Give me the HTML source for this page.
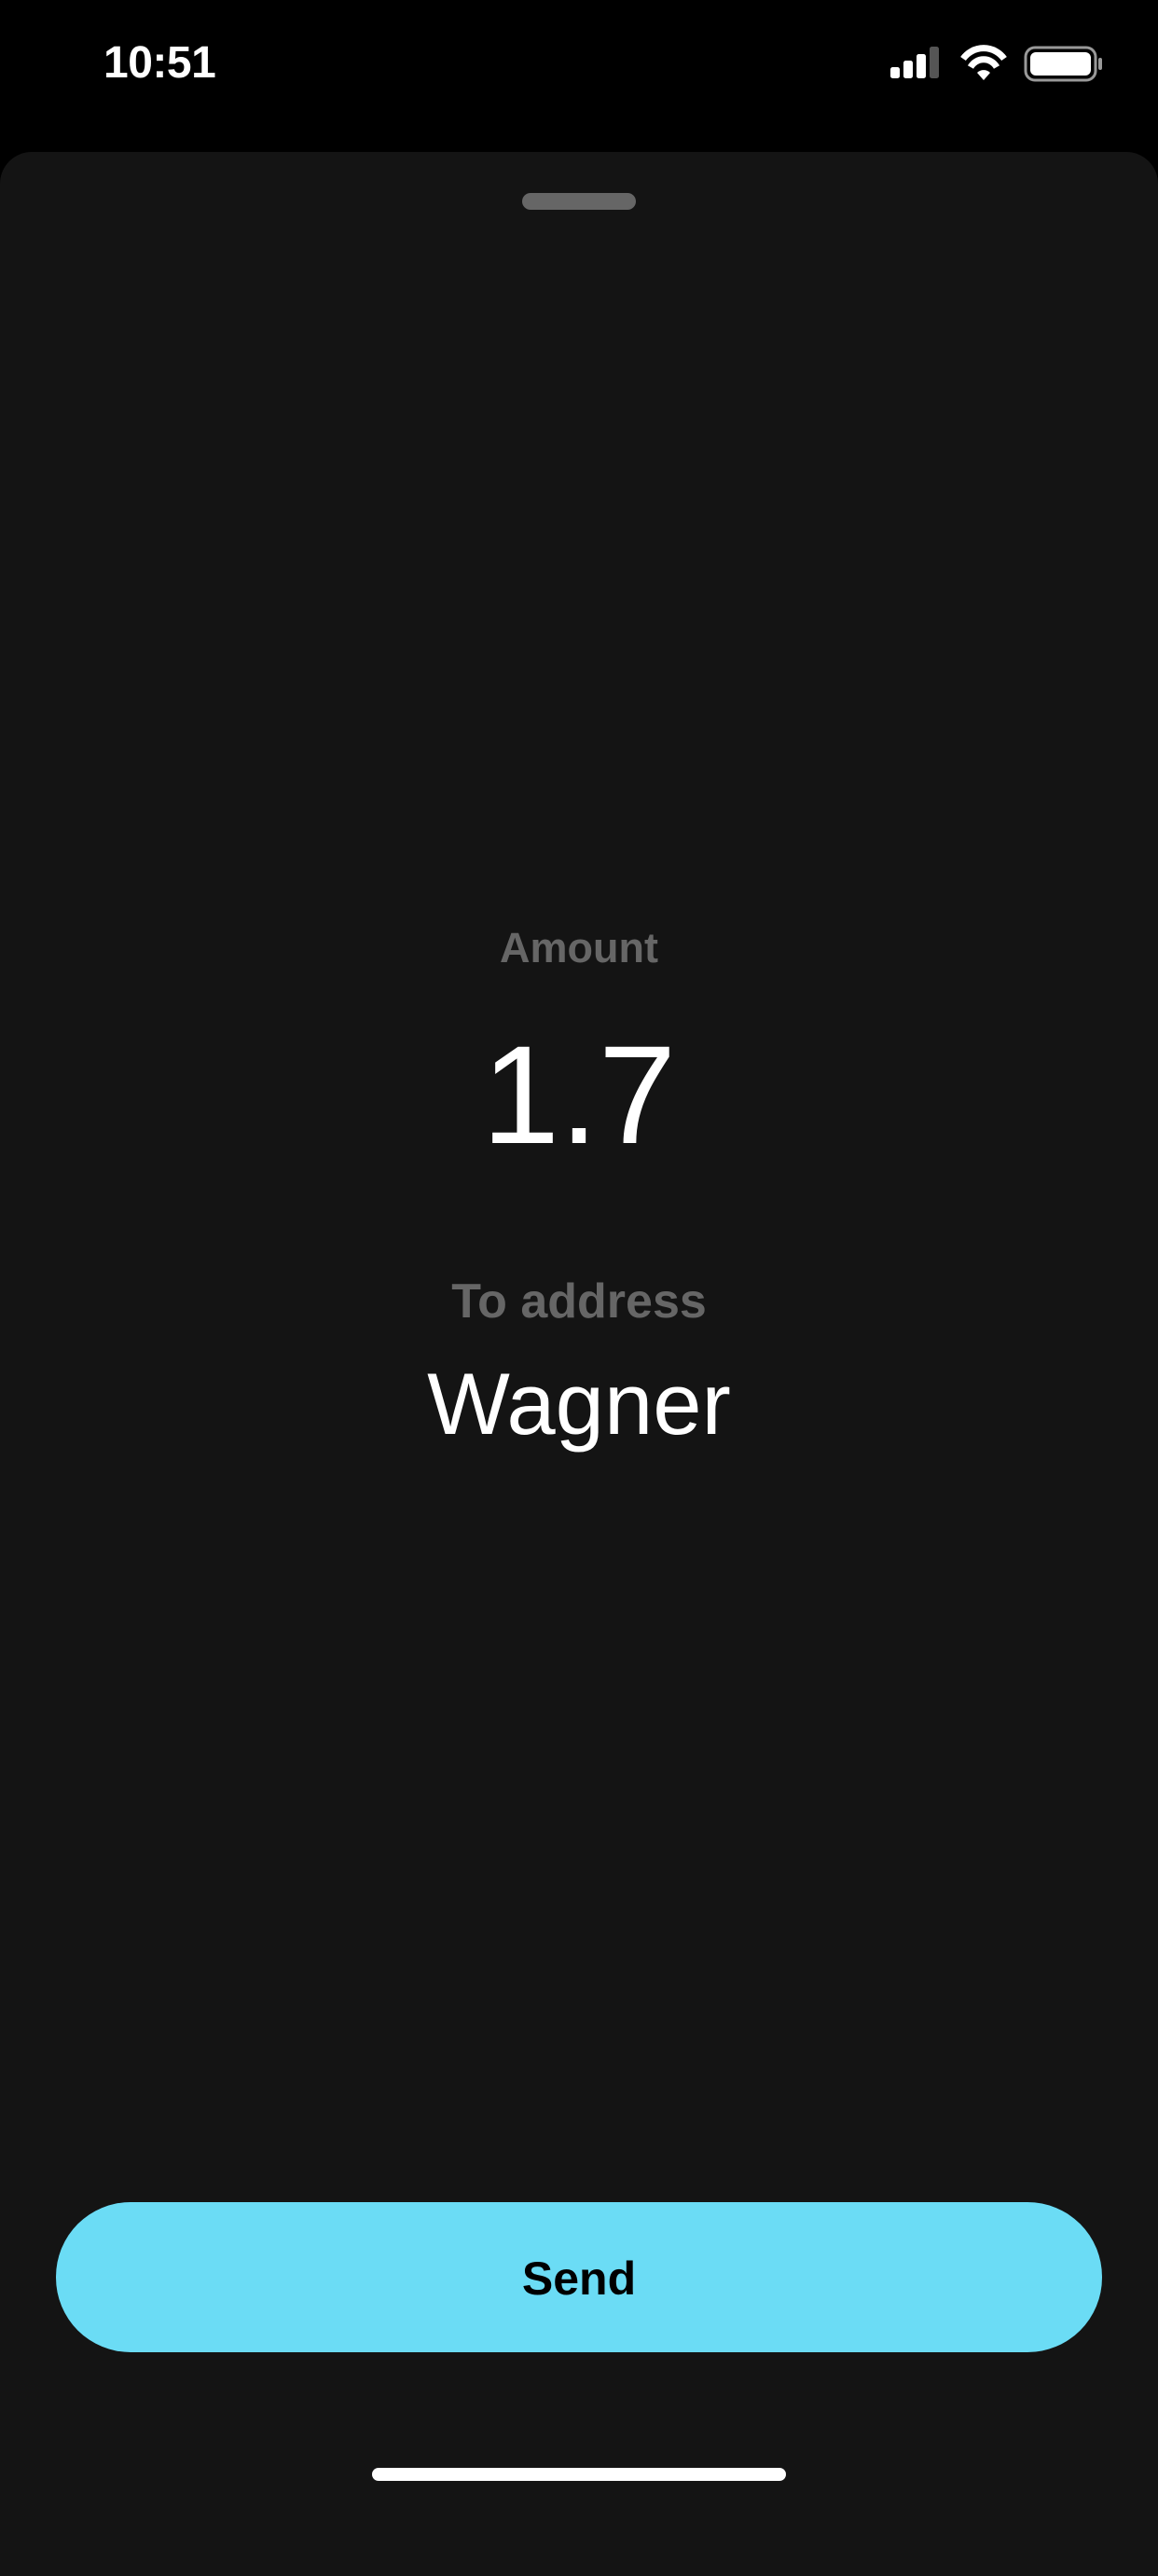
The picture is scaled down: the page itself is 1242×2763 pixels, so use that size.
<!DOCTYPE html>
<html><head><style>
body{margin:0;background:#000;width:1242px;height:2688px;position:relative;overflow:hidden;font-family:"Liberation Sans",sans-serif}
.t{position:absolute;left:0;width:1242px;text-align:center;line-height:1;white-space:nowrap}
</style></head><body>
<div style="position:absolute;left:111px;top:44px;font-size:48px;font-weight:bold;color:#fff;line-height:1;letter-spacing:-0.5px">10:51</div>
<svg style="position:absolute;left:950px;top:45px" width="240" height="45" viewBox="0 0 240 45">
<rect x="5" y="27" width="10" height="12" rx="2.5" fill="#fff"/>
<rect x="19" y="20" width="10" height="19" rx="2.5" fill="#fff"/>
<rect x="33" y="13" width="10" height="26" rx="2.5" fill="#fff"/>
<rect x="47" y="5" width="10" height="34" rx="2.5" fill="#555"/>
<path d="M83 18 A27 27 0 0 1 127 18" stroke="#fff" stroke-width="7" fill="none"/>
<path d="M91 27 A16 16 0 0 1 119 27" stroke="#fff" stroke-width="7" fill="none"/>
<path d="M98 33 L105 41 L112 33 A10 10 0 0 0 98 33 Z" fill="#fff"/>
<rect x="150" y="6" width="75" height="35" rx="10" fill="none" stroke="#999" stroke-width="3"/>
<rect x="155" y="11" width="65" height="25" rx="6" fill="#fff"/>
<rect x="228" y="17" width="4" height="13" rx="2" fill="#999"/>
</svg>
<div style="position:absolute;left:0;top:163px;width:1242px;height:2600px;background:#141414;border-radius:34px 34px 0 0"></div>
<div style="position:absolute;left:560px;top:207px;width:122px;height:18px;border-radius:9px;background:#666"></div>
<div class="t" style="top:994px;font-size:45px;font-weight:bold;color:#666">Amount</div>
<div class="t" style="top:1099px;font-size:150px;color:#fff">1.7</div>
<div class="t" style="top:1370px;font-size:52px;font-weight:bold;color:#666">To address</div>
<div class="t" style="top:1459px;font-size:94px;color:#fff">Wagner</div>
<div style="position:absolute;left:60px;top:2362px;width:1122px;height:161px;border-radius:80px;background:#6bdcf5"></div>
<div class="t" style="top:2419px;font-size:50px;font-weight:bold;color:#000">Send</div>
<div style="position:absolute;left:399px;top:2647px;width:444px;height:14px;border-radius:7px;background:#fff"></div>
</body></html>
